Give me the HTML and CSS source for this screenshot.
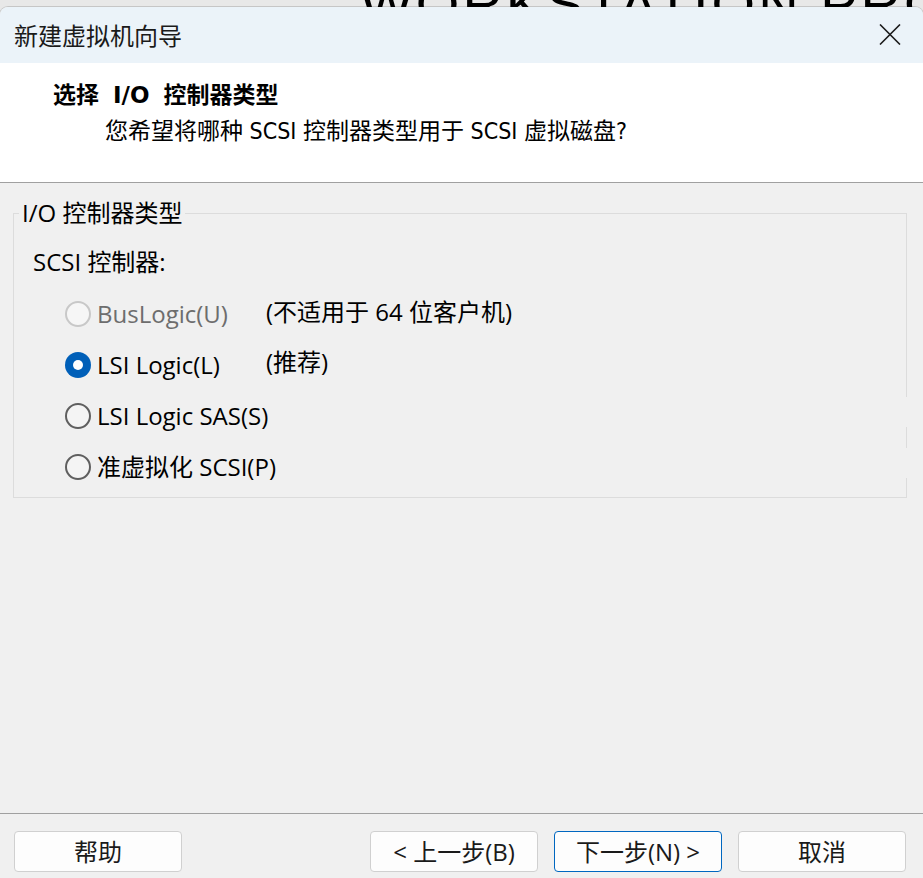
FILE: index.html
```html
<!DOCTYPE html>
<html lang="zh-CN">
<head>
<meta charset="utf-8">
<title>新建虚拟机向导</title>
<link rel="stylesheet" href="styles.css">
</head>
<body>
<div class="desk"><span class="brand">WORKSTATION PRO</span></div>
<div class="window">
  <div class="titlebar">
    <span class="title">新建虚拟机向导</span>
    <svg class="close" width="22" height="21" viewBox="0 0 22 21"><path d="M1 0.5L21 20.5M21 0.5L1 20.5" stroke="#1b1b1b" stroke-width="1.6" fill="none"/></svg>
  </div>
  <div class="header">
    <div class="h-title">选择 I/O 控制器类型</div>
    <div class="h-sub">您希望将哪种 SCSI 控制器类型用于 SCSI 虚拟磁盘?</div>
  </div>
  <div class="content">
    <fieldset class="group">
      <legend>I/O 控制器类型</legend>
      <div class="label">SCSI 控制器:</div>
      <div class="options">
        <div class="opt disabled"><span class="radio"></span><span class="name">BusLogic(U)</span><span class="note">(不适用于 64 位客户机)</span></div>
        <div class="opt checked"><span class="radio"></span><span class="name">LSI Logic(L)</span><span class="note note-up">(推荐)</span></div>
        <div class="opt cover"><span class="radio"></span><span class="name">LSI Logic SAS(S)</span></div>
        <div class="opt cover"><span class="radio"></span><span class="name">准虚拟化 SCSI(P)</span></div>
      </div>
    </fieldset>
  </div>
  <div class="footer">
    <button class="btn">帮助</button>
    <span class="spacer"></span>
    <button class="btn">&lt; 上一步(B)</button>
    <button class="btn primary">下一步(N) &gt;</button>
    <button class="btn">取消</button>
  </div>
</div>
</body>
</html>
```

FILE: styles.css
```css
html, body {
  margin: 0;
  padding: 0;
}
body {
  background: #e8e8e8;
  font-family: "Open Sans", "Noto Sans CJK SC", sans-serif;
  color: #000;
  overflow: hidden;
}
.desk {
  height: 7px;
  overflow: hidden;
}
.brand {
  display: block;
  margin: -24px 0 0 360px;
  font: 56px/1 "Liberation Sans", sans-serif;
  letter-spacing: 3px;
  color: #000;
  white-space: nowrap;
}
.window {
  height: 871px;
  background: #f0f0f0;
  border-radius: 8px 8px 0 0;
  box-shadow: 0 0 0 1px #c6c6c6;
  overflow: hidden;
  display: flex;
  flex-direction: column;
}
.titlebar {
  height: 56px;
  flex: none;
  background: #ebf3f9;
  display: flex;
  align-items: center;
  padding: 0 22px 0 14px;
}
.title {
  flex: 1;
  font: 24px/30px "Noto Sans CJK SC", sans-serif;
  color: #1a1a1a;
}
.close {
  display: block;
  margin-top: -2px;
}
.header {
  height: 119px;
  flex: none;
  background: #fff;
  border-bottom: 1px solid #a0a0a0;
}
.h-title {
  padding: 17px 0 0 53px;
  font: bold 23px/30px "DejaVu Sans", "Noto Sans CJK SC", sans-serif;
  word-spacing: 6px;
  color: #000;
}
.h-sub {
  padding: 6px 0 0 105px;
  font: 23px/30px "DejaVu Sans Condensed", "Noto Sans CJK SC", sans-serif;
  color: #000;
}
.content {
  flex: 1;
  padding: 15px 16px 0 13px;
}
.group {
  margin: 0;
  padding: 0 0 5px 0;
  border: 1px solid #dcdcdc;
  min-width: 0;
}
.group legend {
  margin-left: 5px;
  padding: 0 3px;
  font-size: 24px;
  line-height: 30px;
}
.label {
  margin-top: 19px;
  padding-left: 19px;
  font-size: 24px;
  line-height: 30px;
}
.options {
  margin-top: 11px;
  padding-left: 51px;
}
.opt {
  height: 51px;
  display: flex;
  align-items: center;
  font-size: 24px;
  line-height: 30px;
}
.radio {
  flex: none;
  width: 26px;
  height: 26px;
  box-sizing: border-box;
  border-radius: 50%;
  border: 2px solid #5f5f5f;
  background: #f4f4f4;
  margin-right: 6px;
  display: flex;
  align-items: center;
  justify-content: center;
}
.disabled .radio {
  border: 2px solid #c8c8c8;
  background: #f6f6f6;
}
.checked .radio {
  border: none;
  background: #005fb8;
}
.checked .radio::after {
  content: "";
  width: 10px;
  height: 10px;
  border-radius: 50%;
  background: #fff;
}
.name {
  min-width: 169px;
  flex: none;
  white-space: nowrap;
}
.disabled .name {
  color: #6d6d6d;
}
.note {
  white-space: nowrap;
  margin-top: -4px;
}
.note-up {
  margin-top: -6px;
}
.cover {
  margin-right: -1px;
}
.cover::after {
  content: "";
  flex: 1;
  height: 30px;
  margin-bottom: 8px;
  background: #f0f0f0;
}
.footer {
  flex: none;
  height: 65px;
  box-sizing: border-box;
  border-top: 1px solid #a0a0a0;
  display: flex;
  align-items: flex-start;
  gap: 16px;
  padding: 17px 17px 0 14px;
}
.spacer {
  flex: 1;
}
.btn {
  width: 168px;
  height: 41px;
  padding: 0;
  background: #fdfdfd;
  border: 1px solid #d0d0d0;
  border-radius: 4px;
  font: 24px/30px "Open Sans", "Noto Sans CJK SC", sans-serif;
  color: #1a1a1a;
}
.primary {
  border-color: #0067c0;
}
```
